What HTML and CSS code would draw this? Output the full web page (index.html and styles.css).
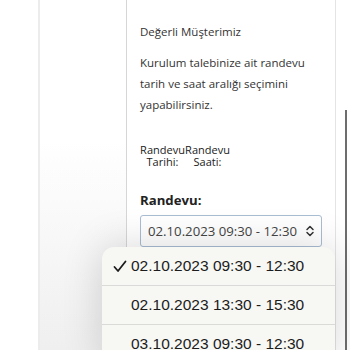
FILE: index.html
```html
<!DOCTYPE html>
<html lang="tr">

<head>
    <meta charset="UTF-8">
    <meta name="viewport" content="width=device-width, initial-scale=1.0">
    <title>Randevu Seçimi</title>
    <link rel="stylesheet" href="styles.css">
</head>

<body>
    <div class="page">
        <div class="gutter"></div>
        <div class="side-column"></div>

        <main class="panel">
            <p class="greeting">Değerli Müşterimiz</p>
            <p class="intro">Kurulum talebinize ait randevu tarih ve saat aralığı seçimini yapabilirsiniz.</p>

            <table class="slot-table">
                <thead>
                    <tr>
                        <th>Randevu Tarihi:</th>
                        <th>Randevu Saati:</th>
                    </tr>
                </thead>
            </table>

            <label class="field-label" for="slot">Randevu:</label>
            <div class="select-box" id="slot">
                <span>02.10.2023 09:30 - 12:30</span>
                <svg class="select-arrows" width="10" height="12" viewBox="0 0 10 12">
                    <path d="M2 4.5 L5 1.5 L8 4.5 M2 7.5 L5 10.5 L8 7.5" fill="none" stroke="#333" stroke-width="1.5" stroke-linecap="round" stroke-linejoin="round"/>
                </svg>
            </div>
        </main>

        <div class="right-gutter"></div>
    </div>

    <div class="scroll-thumb"></div>

    <!-- native picker popover -->
    <ul class="picker">
        <li class="picker-item selected">
            <svg class="check" width="14" height="13" viewBox="0 0 14 13">
                <path d="M1.5 7 L5 11 L12.5 1.5" fill="none" stroke="#1c1c1c" stroke-width="1.8" stroke-linecap="round" stroke-linejoin="round"/>
            </svg>02.10.2023 09:30 - 12:30
        </li>
        <li class="picker-item">02.10.2023 13:30 - 15:30</li>
        <li class="picker-item">03.10.2023 09:30 - 12:30</li>
    </ul>
</body>

</html>
```

FILE: styles.css
```css
* {
    margin: 0;
    padding: 0;
    box-sizing: border-box;
}

body {
    font-family: "Open Sans", Arial, sans-serif;
    background-color: #ffffff;
    color: #333333;
    overflow: hidden;
    height: 350px;
}

.page {
    display: flex;
    height: 350px;
}

.gutter {
    width: 38px;
    flex-shrink: 0;
}

.side-column {
    width: 89px;
    flex-shrink: 0;
    border-left: 2px solid #ececec;
    border-right: 1px solid #d6d6d6;
    background: linear-gradient(to bottom, #ffffff 0%, #ffffff 40%, #efefef 100%);
}

.panel {
    width: 209px;
    flex-shrink: 0;
    border-right: 1px solid #e4e4e4;
    padding: 23px 10px 0 13px;
}

.right-gutter {
    flex: 1;
}

.greeting {
    font-size: 11.5px;
    line-height: 18px;
    margin-bottom: 11px;
}

.intro {
    font-size: 11.5px;
    line-height: 21px;
    margin-bottom: 29px;
}

.slot-table {
    border-collapse: collapse;
    margin-bottom: 23px;
}

.slot-table th {
    font-size: 11px;
    font-weight: normal;
    line-height: 12px;
    text-align: center;
    width: 45px;
    color: #222222;
}

.field-label {
    display: block;
    font-size: 13.2px;
    font-weight: bold;
    line-height: 18px;
    margin-bottom: 6px;
    color: #222222;
}

.select-box {
    display: flex;
    align-items: center;
    justify-content: space-between;
    width: 182px;
    height: 32px;
    padding: 0 6px 0 7px;
    border: 1px solid #a9bdd3;
    border-radius: 3px;
    font-size: 13.2px;
    white-space: nowrap;
    color: #444444;
}

.scroll-thumb {
    position: absolute;
    top: 110px;
    left: 345px;
    width: 2px;
    height: 240px;
    background-color: #6d6d6d;
}

.picker {
    position: absolute;
    top: 247px;
    left: 102px;
    width: 233px;
    list-style-type: none;
    background-color: #f7f7f4;
    border-radius: 12px;
    box-shadow: 0 0 40px rgba(0, 0, 0, 0.16);
    font-family: "Liberation Sans", Arial, sans-serif;
    font-size: 15.5px;
    color: #1c1c1c;
}

.picker-item {
    height: 39px;
    line-height: 38px;
    padding-left: 29px;
    border-bottom: 1px solid #dadad8;
    position: relative;
}

.check {
    position: absolute;
    left: 11px;
    top: 13px;
}
```
